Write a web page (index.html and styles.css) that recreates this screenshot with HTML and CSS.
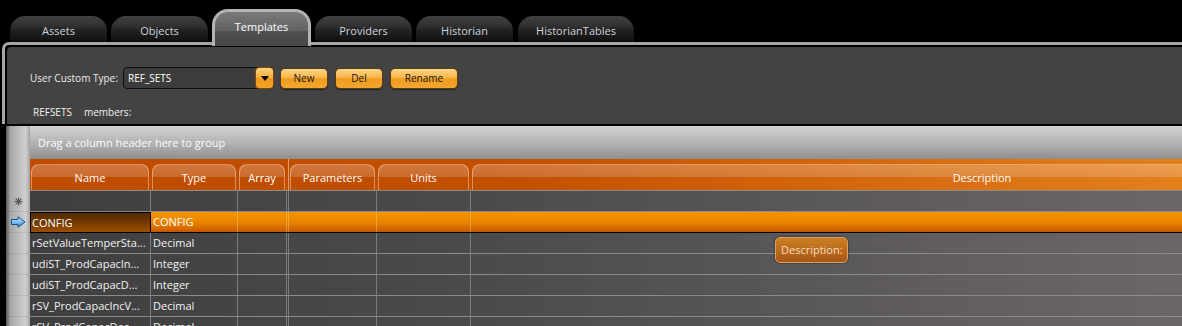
FILE: index.html
```html
<!DOCTYPE html>
<html>
<head>
<meta charset="utf-8">
<link rel="stylesheet" href="styles.css">
</head>
<body>
<div class="tabs">
  <div class="tab">Assets</div>
  <div class="tab">Objects</div>
  <div class="tab active">Templates</div>
  <div class="tab">Providers</div>
  <div class="tab">Historian</div>
  <div class="tab wide">HistorianTables</div>
</div>
<div class="panel">
  <div class="toolbar">
    <span class="label">User Custom Type:</span>
    <div class="combo">
      <span class="combo-text">REF_SETS</span>
      <div class="combo-btn"><span class="tri"></span></div>
    </div>
    <button class="btn w48">New</button>
    <button class="btn w48">Del</button>
    <button class="btn w68">Rename</button>
  </div>
  <div class="members"><span>REFSETS</span><span>members:</span></div>
  <div class="grid">
    <div class="indicator">
      <div class="ind-top"></div>
      <div class="ind-cell">
        <svg width="9" height="9" viewBox="0 0 9 9"><g stroke="#5a5a5a" stroke-width="1.2"><line x1="4.5" y1="0.5" x2="4.5" y2="8.5"/><line x1="0.5" y1="4.5" x2="8.5" y2="4.5"/><line x1="1.7" y1="1.7" x2="7.3" y2="7.3"/><line x1="7.3" y1="1.7" x2="1.7" y2="7.3"/></g></svg>
      </div>
      <div class="ind-cell arrow">
        <svg width="15" height="12" viewBox="0 0 15 12"><defs><linearGradient id="ag" x1="0" y1="0" x2="0" y2="1"><stop offset="0" stop-color="#cdebff"/><stop offset="0.5" stop-color="#7cc0f4"/><stop offset="1" stop-color="#2f80cc"/></linearGradient></defs><path d="M0.5 3.5H7V0.8L14 6L7 11.2V8.5H0.5Z" fill="url(#ag)" stroke="#1b4f8f" stroke-width="1"/></svg>
      </div>
      <div class="ind-cell"></div>
      <div class="ind-cell"></div>
      <div class="ind-cell"></div>
      <div class="ind-cell"></div>
      <div class="ind-cell"></div>
    </div>
    <div class="grid-body">
      <div class="group-panel">Drag a column header here to group</div>
      <div class="hdr-row">
        <div class="hcell c-name"><div class="hshape">Name</div></div>
        <div class="hcell c-type"><div class="hshape">Type</div></div>
        <div class="hcell c-array"><div class="hshape">Array</div></div>
        <div class="hcell c-split"></div>
        <div class="hcell c-params"><div class="hshape">Parameters</div></div>
        <div class="hcell c-units"><div class="hshape">Units</div></div>
        <div class="hcell c-desc"><div class="hshape desc">Description</div></div>
      </div>
      <div class="row">
        <div class="cell c-name"></div><div class="cell c-type"></div><div class="cell c-array"></div><div class="cell c-split"></div><div class="cell c-params"></div><div class="cell c-units"></div><div class="cell c-desc"></div>
      </div>
      <div class="row selected">
        <div class="cell c-name current">CONFIG</div><div class="cell c-type">CONFIG</div><div class="cell c-array"></div><div class="cell c-split"></div><div class="cell c-params"></div><div class="cell c-units"></div><div class="cell c-desc"></div>
      </div>
      <div class="row">
        <div class="cell c-name">rSetValueTemperSta...</div><div class="cell c-type">Decimal</div><div class="cell c-array"></div><div class="cell c-split"></div><div class="cell c-params"></div><div class="cell c-units"></div><div class="cell c-desc"></div>
      </div>
      <div class="row">
        <div class="cell c-name">udiST_ProdCapacIn...</div><div class="cell c-type">Integer</div><div class="cell c-array"></div><div class="cell c-split"></div><div class="cell c-params"></div><div class="cell c-units"></div><div class="cell c-desc"></div>
      </div>
      <div class="row">
        <div class="cell c-name">udiST_ProdCapacD...</div><div class="cell c-type">Integer</div><div class="cell c-array"></div><div class="cell c-split"></div><div class="cell c-params"></div><div class="cell c-units"></div><div class="cell c-desc"></div>
      </div>
      <div class="row">
        <div class="cell c-name">rSV_ProdCapacIncV...</div><div class="cell c-type">Decimal</div><div class="cell c-array"></div><div class="cell c-split"></div><div class="cell c-params"></div><div class="cell c-units"></div><div class="cell c-desc"></div>
      </div>
      <div class="row">
        <div class="cell c-name">rSV_ProdCapacDec...</div><div class="cell c-type">Decimal</div><div class="cell c-array"></div><div class="cell c-split"></div><div class="cell c-params"></div><div class="cell c-units"></div><div class="cell c-desc"></div>
      </div>
      <div class="tooltip">Description:</div>
    </div>
  </div>
</div>
</body>
</html>
```

FILE: styles.css
```css
html, body {
  margin: 0;
  padding: 0;
}
body {
  background: #000;
  width: 1182px;
  height: 326px;
  overflow: hidden;
  font-family: "Open Sans", "Noto Sans", sans-serif;
  font-size: 11px;
}

/* ---------- tabs ---------- */
.tabs {
  display: flex;
  align-items: flex-end;
  height: 42px;
  padding-left: 10px;
  gap: 4px;
}
.tab {
  width: 97px;
  height: 26px;
  box-sizing: border-box;
  padding-top: 4px;
  line-height: 22px;
  text-align: center;
  color: #ccd3da;
  border-radius: 15px 15px 0 0;
  background: linear-gradient(#414141 0%, #303030 40%, #232323 52%, #141414 90%, #0a0a0a 100%);
}
.tab.wide {
  width: 116px;
  margin-left: 1px;
}
.tab.active {
  position: relative;
  z-index: 3;
  width: 99px;
  height: 37px;
  margin-bottom: -4px;
  padding-top: 5px;
  line-height: 20px;
  color: #fff;
  border: 3px solid #b4b4b4;
  border-bottom: none;
  border-radius: 16px 16px 0 0;
  background: linear-gradient(#7a7a7a 0%, #626262 55%, #4f4f4f 58%, #464646 100%);
}

/* ---------- panel ---------- */
.panel {
  margin-left: 2px;
  border-top: 3px solid #a6a6a6;
  border-left: 3px solid #a6a6a6;
  border-top-left-radius: 7px;
  background: #434343;
  box-shadow: inset 2px 2px 0 #000;
  height: 281px;
  color: #ececec;
  font-size: 10px;
}
.toolbar {
  display: flex;
  align-items: center;
  height: 22px;
  padding: 22px 0 0 25px;
}
.label {
  width: 93px;
  white-space: nowrap;
}
.combo {
  display: flex;
  align-items: stretch;
  width: 151px;
  height: 22px;
  box-sizing: border-box;
  border: 1px solid #0e0e0e;
  border-radius: 4px;
  background: #3c3c3c;
}
.combo-text {
  flex: 1;
  padding-left: 4px;
  line-height: 20px;
  color: #fff;
}
.combo-btn {
  width: 19px;
  margin: -1px -1px -1px 0;
  border-radius: 4px;
  border: 1px solid #7a4a10;
  box-sizing: border-box;
  background: linear-gradient(#fbd27e 0%, #f5ad3c 48%, #ee9816 52%, #f2a52c 100%);
  display: flex;
  align-items: center;
  justify-content: center;
}
.tri {
  width: 0;
  height: 0;
  border-left: 4px solid transparent;
  border-right: 4px solid transparent;
  border-top: 5px solid #000;
}
.btn {
  height: 21px;
  margin-left: 6px;
  padding: 0;
  box-sizing: border-box;
  border: 1px solid #5e3c12;
  border-radius: 5px;
  background: linear-gradient(#fcd68a 0%, #f6b54a 45%, #f09c1c 52%, #f2a632 100%);
  color: #111;
  font-family: "Open Sans", "Noto Sans", sans-serif;
  font-size: 10px;
  line-height: 19px;
  box-shadow: 0 1px 1px rgba(0, 0, 0, 0.5);
}
.btn + .btn {
  margin-left: 7px;
}
.w48 { width: 48px; }
.w68 { width: 68px; }

.members {
  display: flex;
  gap: 12px;
  height: 20px;
  line-height: 20px;
  margin-top: 13px;
  padding-left: 28px;
  color: #f0f0f0;
}

/* ---------- grid ---------- */
.grid {
  display: flex;
  margin-top: 2px;
  margin-left: -3px;
  border-top: 2px solid #000;
  border-left: 4px solid #000;
  background: #000;
  font-size: 11px;
  height: 200px;
  overflow: hidden;
}
.indicator {
  width: 24px;
  flex: none;
  background: linear-gradient(to right, #5c5c5c 0, #8a8a8a 3px, #a6a6a6 4px, #cfcfcf 19px, #c4c4c4 21px, #a2a2a2 24px);
}
.ind-top {
  height: 65px;
}
.ind-cell {
  height: 21px;
  box-sizing: border-box;
  border-bottom: 1px solid rgba(0, 0, 0, 0.07);
  display: flex;
  align-items: center;
  justify-content: center;
  padding-left: 1px;
}
.ind-cell.arrow {
  justify-content: flex-start;
  padding-left: 5px;
}
.grid-body {
  position: relative;
  flex: 1;
  min-width: 0;
  overflow: hidden;
}
.group-panel {
  height: 33px;
  line-height: 33px;
  padding-left: 8px;
  background: linear-gradient(#d2d2d2, #b4b4b4 50%, #8f8f8f);
  color: #fcfcfc;
  white-space: nowrap;
}
.hdr-row {
  display: flex;
  height: 32px;
  box-sizing: border-box;
  border-bottom: 1px solid #8c8c8c;
  background: linear-gradient(to right, #c04c00 0, #c24e00 40%, #e3801c 100%);
}
.hcell {
  box-sizing: border-box;
  padding: 5px 2px 0 1px;
}
.hshape {
  height: 100%;
  box-sizing: border-box;
  border: 1px solid rgba(255, 225, 200, 0.45);
  border-bottom: none;
  border-radius: 8px 8px 0 0;
  background: linear-gradient(rgba(255, 255, 255, 0.24) 0%, rgba(255, 255, 255, 0.17) 48%, rgba(255, 255, 255, 0) 50%);
  color: #fff;
  text-align: center;
  line-height: 25px;
  white-space: nowrap;
}
.hshape.desc {
  margin-right: -312px;
}
.hcell.c-split {
  padding: 3px 0 0 0;
  border-right: 1px solid rgba(255, 220, 190, 0.55);
}

.row {
  display: flex;
  height: 21px;
  box-sizing: border-box;
  border-bottom: 1px solid #8a8a8a;
  background: linear-gradient(to right, #3f3f3f 0%, #4c4b4b 40%, #6b6766 100%);
  color: #f2f2f2;
}
.cell {
  box-sizing: border-box;
  border-right: 1px solid #7c7c7c;
  padding-left: 2px;
  line-height: 20px;
  white-space: nowrap;
  overflow: hidden;
}
.c-name { width: 121px; flex: none; }
.c-type { width: 87px; flex: none; }
.c-array { width: 49px; flex: none; }
.c-split { width: 2px; flex: none; padding: 0; }
.c-params { width: 88px; flex: none; }
.c-units { width: 94px; flex: none; }
.c-desc { flex: 1; border-right: none; }

.row.selected {
  border-bottom: 1px solid #000;
  background: linear-gradient(#f39500 0%, #ec8700 45%, #d66c00 80%, #c45600 100%);
  color: #fff;
}
.row.selected .cell {
  border-right-color: rgba(255, 215, 160, 0.35);
}
.row.selected .cell.current {
  border: 1px solid #000;
  border-bottom: none;
  line-height: 19px;
  padding-left: 1px;
  background: linear-gradient(#552a00 0%, #6e3800 45%, #8c4600 80%, #a04e00 100%);
}

.tooltip {
  position: absolute;
  left: 745px;
  top: 111px;
  width: 73px;
  height: 26px;
  box-sizing: border-box;
  border: 1px solid #dca060;
  border-radius: 5px;
  background: linear-gradient(#c97f24 0%, #bb6a1a 50%, #a8561a 100%);
  box-shadow: 0 0 2px rgba(0, 0, 0, 0.8);
  color: #f6dcc0;
  padding-left: 5px;
  line-height: 24px;
  white-space: nowrap;
}
```
